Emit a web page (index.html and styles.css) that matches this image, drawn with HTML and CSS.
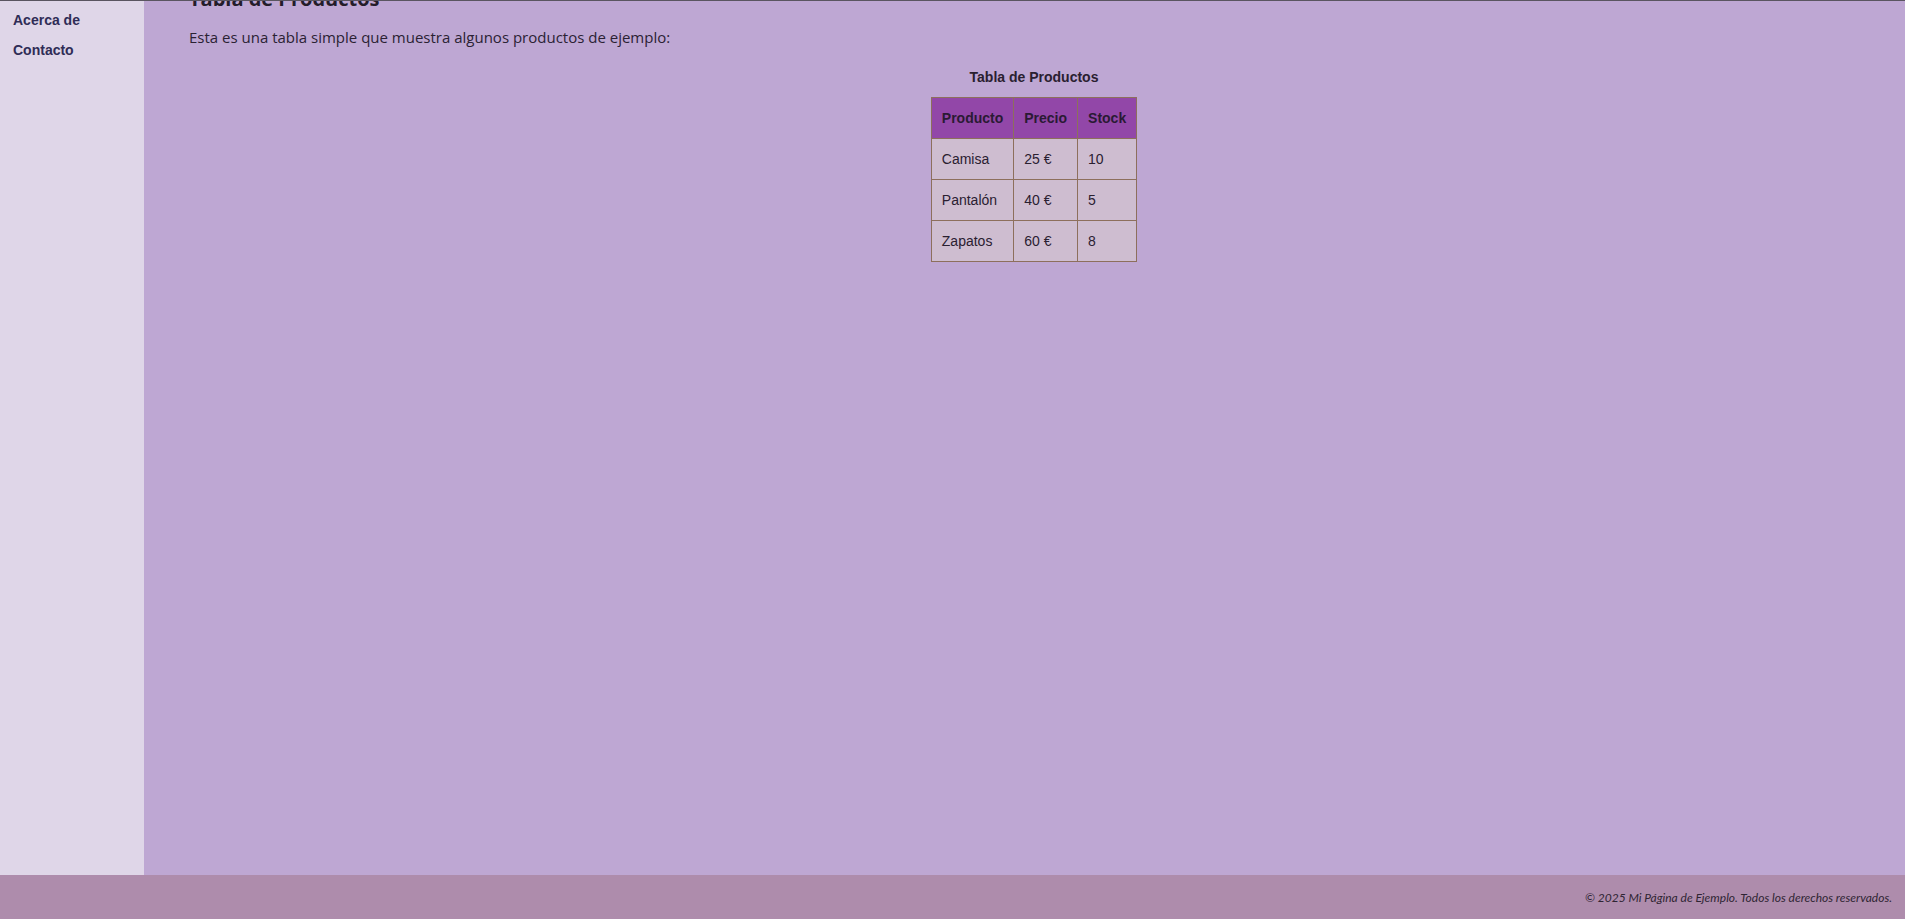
FILE: index.html
```html
<!DOCTYPE html>
<html lang="es">
<head>
<meta charset="utf-8">
<title>Mi Página de Ejemplo</title>
<link rel="stylesheet" href="styles.css">
</head>
<body>
<div class="page">
  <div class="layout">
    <aside class="sidebar">
      <nav class="side-nav">
        <a href="#" class="side-link">Acerca de</a>
        <a href="#" class="side-link">Contacto</a>
      </nav>
    </aside>
    <main class="content">
      <h2 class="section-title">Tabla de Productos</h2>
      <p class="intro">Esta es una tabla simple que muestra algunos productos de ejemplo:</p>
      <table class="products">
        <caption class="products-caption">Tabla de Productos</caption>
        <thead>
          <tr><th>Producto</th><th>Precio</th><th>Stock</th></tr>
        </thead>
        <tbody>
          <tr><td>Camisa</td><td>25 €</td><td>10</td></tr>
          <tr><td>Pantalón</td><td>40 €</td><td>5</td></tr>
          <tr><td>Zapatos</td><td>60 €</td><td>8</td></tr>
        </tbody>
      </table>
    </main>
  </div>
  <footer class="footer">
    <p class="footer-text">© 2025 Mi Página de Ejemplo. Todos los derechos reservados.</p>
  </footer>
</div>
</body>
</html>
```

FILE: styles.css
```css
html, body {
  margin: 0;
  padding: 0;
}
body {
  font-family: "Open Sans", "Noto Sans", sans-serif;
  color: #2b2233;
  background: #bea7d3;
}
.page {
  display: flex;
  flex-direction: column;
  height: 100vh;
  box-sizing: border-box;
  border-top: 1px solid #5a5560;
  overflow: hidden;
}
.layout {
  flex: 1;
  display: flex;
  min-height: 0;
}
.sidebar {
  width: 144px;
  flex: none;
  background: #dfd6e8;
}
.side-nav {
  display: flex;
  flex-direction: column;
  gap: 14px;
  padding: 11px 13px;
}
.side-link {
  font-family: "Liberation Sans", Arial, sans-serif;
  font-weight: bold;
  font-size: 14px;
  line-height: 16px;
  color: #2f2c56;
  text-decoration: none;
}
.content {
  flex: 1;
  padding: 0 26px 0 45px;
  background: #bea7d3;
}
.section-title {
  font-family: "Open Sans", "Noto Sans", sans-serif;
  font-size: 20px;
  font-weight: bold;
  line-height: 26px;
  margin: -15px 0 0 0;
  color: #241c2a;
}
.intro {
  font-size: 15px;
  line-height: 20px;
  margin: 15px 0 0 0;
  color: #2b2233;
}
.products {
  margin: 22px auto 0;
  border-collapse: collapse;
  font-family: "Liberation Sans", Arial, sans-serif;
  font-size: 14px;
  color: #2a2030;
}
.products-caption {
  font-weight: bold;
  font-size: 14px;
  line-height: 16px;
  padding: 0 0 12px;
  color: #2a2030;
}
.products th,
.products td {
  border: 1px solid #8d6f5c;
  padding: 12px 10px;
  line-height: 16px;
  text-align: left;
}
.products th {
  background: #9247a8;
  font-weight: bold;
  color: #2a1a34;
}
.products td {
  background: #cebdd0;
}
.footer {
  height: 44px;
  flex: none;
  background: #ae8cac;
  display: flex;
  align-items: center;
  justify-content: flex-end;
  padding: 0 13px;
}
.footer-text {
  margin: 0;
  font-family: Lato, "Open Sans", sans-serif;
  font-style: italic;
  font-size: 12px;
  color: #2e2533;
}
```
